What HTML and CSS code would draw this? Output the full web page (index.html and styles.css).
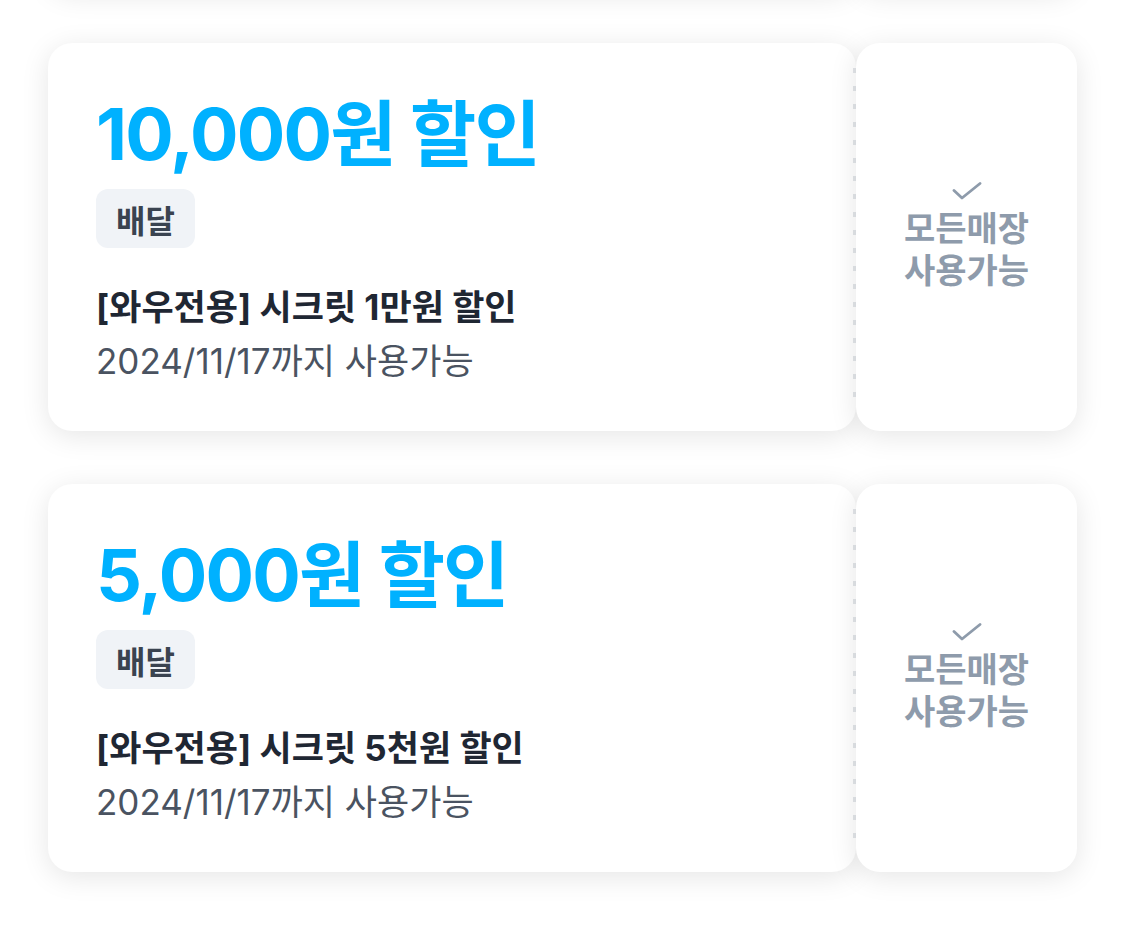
FILE: index.html
```html
<!DOCTYPE html>
<html lang="ko">
<head>
<meta charset="utf-8">
<title>쿠폰</title>
<link rel="stylesheet" href="styles.css">
</head>
<body>
<div class="coupon-list">
  <div class="coupon coupon-prev" aria-hidden="true">
    <div class="coupon-main"></div>
    <div class="coupon-stub"></div>
  </div>
  <div class="coupon">
    <div class="coupon-main">
      <div class="amount">10,000원 할인</div>
      <span class="tag">배달</span>
      <div class="name">[와우전용] 시크릿 1만원 할인</div>
      <div class="expire">2024/11/17까지 사용가능</div>
    </div>
    <div class="coupon-stub">
      <svg class="check" width="30" height="18" viewBox="0 0 30 18"><path d="M2 8.5 L10 16 L28 1.5" fill="none" stroke="#8e9bab" stroke-width="2.8" stroke-linecap="round" stroke-linejoin="round"/></svg>
      <div class="stub-text">모든매장<br>사용가능</div>
    </div>
  </div>
  <div class="coupon">
    <div class="coupon-main">
      <div class="amount">5,000원 할인</div>
      <span class="tag">배달</span>
      <div class="name">[와우전용] 시크릿 5천원 할인</div>
      <div class="expire">2024/11/17까지 사용가능</div>
    </div>
    <div class="coupon-stub">
      <svg class="check" width="30" height="18" viewBox="0 0 30 18"><path d="M2 8.5 L10 16 L28 1.5" fill="none" stroke="#8e9bab" stroke-width="2.8" stroke-linecap="round" stroke-linejoin="round"/></svg>
      <div class="stub-text">모든매장<br>사용가능</div>
    </div>
  </div>
</div>
</body>
</html>
```

FILE: styles.css
```css
html, body {
  margin: 0;
  padding: 0;
  background: #ffffff;
}
body {
  font-family: "Inter", "Noto Sans CJK KR", sans-serif;
  overflow: hidden;
  height: 929px;
}
.coupon-list {
  display: flex;
  flex-direction: column;
  gap: 53px;
  padding: 0 48px;
  margin-top: -398px;
}
.coupon {
  display: grid;
  grid-template-columns: 808px 221px;
  height: 388px;
}
.coupon-main {
  background-color: #ffffff;
  background-image: repeating-linear-gradient(to bottom, #e2e5e9 0 5px, transparent 5px 18px);
  background-repeat: no-repeat;
  background-size: 3px 330px;
  background-position: right 0 top 25px;
  border-radius: 24px;
  box-shadow: 0 5px 28px rgba(0, 0, 0, 0.1);
  padding: 44px 48px 0;
  display: flex;
  flex-direction: column;
  align-items: flex-start;
}
.amount {
  font-size: 72px;
  font-weight: 700;
  line-height: 94px;
  color: #00b1ff;
  letter-spacing: -1.8px;
}
.tag {
  margin-top: 8px;
  height: 59px;
  padding: 0 20px;
  display: inline-flex;
  align-items: center;
  background: #f0f3f7;
  border-radius: 12px;
  font-size: 32px;
  font-weight: 700;
  color: #3a4350;
}
.name {
  margin-top: 32px;
  font-size: 35px;
  line-height: 54px;
  font-weight: 700;
  color: #1f2733;
}
.expire {
  font-size: 35px;
  line-height: 54px;
  font-weight: 400;
  color: #4a5361;
}
.coupon-stub {
  background: #ffffff;
  border-radius: 24px;
  box-shadow: 0 5px 28px rgba(0, 0, 0, 0.1);
  display: flex;
  flex-direction: column;
  align-items: center;
  justify-content: center;
}
.check {
  display: block;
  margin-bottom: 8px;
}
.stub-text {
  font-size: 34px;
  line-height: 42px;
  font-weight: 600;
  color: #8e9bab;
  text-align: center;
}
```
